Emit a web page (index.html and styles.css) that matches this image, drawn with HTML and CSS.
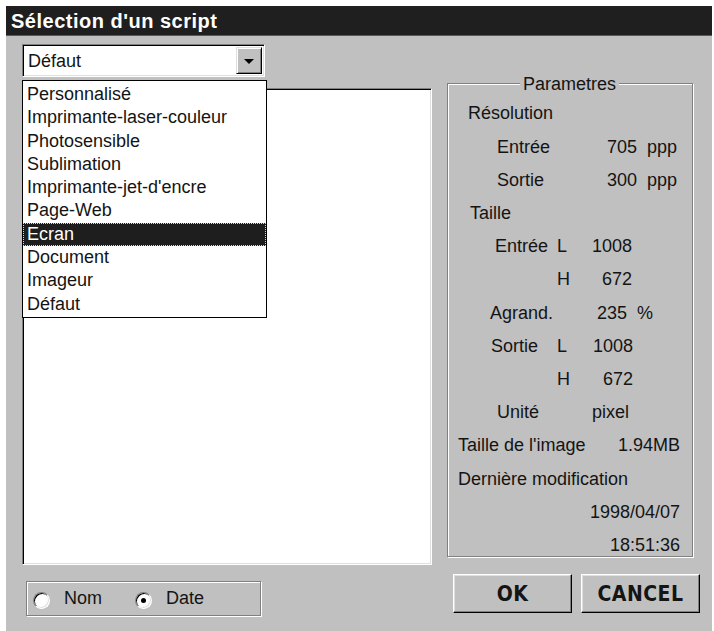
FILE: index.html
```html
<!DOCTYPE html>
<html lang="fr">
<head>
<meta charset="utf-8">
<title>Sélection d'un script</title>
<link rel="stylesheet" href="styles.css">
</head>
<body>
<div class="dialog">
  <div class="titlebar">Sélection d'un script</div>
  <div class="main">
    <div class="leftcol">
      <div class="combo">
        <div class="combo-text">Défaut</div>
        <div class="combo-btn"><span class="arrow"></span></div>
        <ul class="dropdown">
          <li>Personnalisé</li>
          <li>Imprimante-laser-couleur</li>
          <li>Photosensible</li>
          <li>Sublimation</li>
          <li>Imprimante-jet-d'encre</li>
          <li>Page-Web</li>
          <li class="sel">Ecran</li>
          <li>Document</li>
          <li>Imageur</li>
          <li>Défaut</li>
        </ul>
      </div>
      <div class="listbox"></div>
      <div class="radiogroup">
        <span class="radio"></span><span class="rlabel">Nom</span>
        <span class="radio checked"></span><span class="rlabel">Date</span>
      </div>
    </div>
    <div class="rightcol">
      <div class="group">
        <span class="legend">Parametres</span>
        <div class="rows">
          <div class="row"><span class="p20">Résolution</span></div>
          <div class="row"><span class="p49">Entrée</span><span class="v mr15">705&nbsp;&nbsp;ppp</span></div>
          <div class="row"><span class="p49">Sortie</span><span class="v mr15">300&nbsp;&nbsp;ppp</span></div>
          <div class="row"><span class="p22">Taille</span></div>
          <div class="row"><span class="c109 p47">Entrée</span><span>L</span><span class="v mr60">1008</span></div>
          <div class="row"><span class="c109"></span><span>H</span><span class="v mr60">672</span></div>
          <div class="row"><span class="p42">Agrand.</span><span class="v mr39">235&nbsp;&nbsp;%</span></div>
          <div class="row"><span class="c109 p43">Sortie</span><span>L</span><span class="v mr59">1008</span></div>
          <div class="row"><span class="c109"></span><span>H</span><span class="v mr59">672</span></div>
          <div class="row"><span class="c144 p49">Unité</span><span>pixel</span></div>
          <div class="row"><span class="p10">Taille de l'image</span><span class="v mr12">1.94MB</span></div>
          <div class="row"><span class="p10">Dernière modification</span></div>
          <div class="row"><span class="v mr12">1998/04/07</span></div>
          <div class="row"><span class="v mr12">18:51:36</span></div>
        </div>
      </div>
      <div class="buttons">
        <div class="btn">OK</div>
        <div class="btn">CANCEL</div>
      </div>
    </div>
  </div>
</div>
</body>
</html>
```

FILE: styles.css
```css
html, body {
  margin: 0;
  padding: 0;
  background: #ffffff;
}

body {
  font-family: "Liberation Sans", Arial, sans-serif;
  font-size: 18px;
  color: #141414;
}

.dialog {
  margin: 6px 2px 0 6px;
  height: 625px;
  background: #c0c0c0;
  display: flex;
  flex-direction: column;
}

.titlebar {
  height: 30px;
  line-height: 30px;
  background: #1f1f1f;
  color: #ffffff;
  font-weight: bold;
  font-size: 20px;
  letter-spacing: 0.5px;
  padding-left: 5px;
  border-bottom: 1px solid #5a5a5a;
  box-sizing: border-box;
}

.main {
  display: flex;
  padding: 8px 0 0 16px;
  gap: 15px;
}

.leftcol {
  width: 410px;
  display: flex;
  flex-direction: column;
}

/* combo */
.combo {
  position: relative;
  width: 243px;
  height: 33px;
  box-sizing: border-box;
  background: #ffffff;
  border: 1px solid;
  border-color: #808080 #ffffff #ffffff #808080;
  box-shadow: inset 1px 1px 0 #000000, inset -1px -1px 0 #dfdfdf;
  display: flex;
  padding: 2px;
}

.combo-text {
  flex: 1;
  line-height: 28px;
  padding-left: 3px;
}

.combo-btn {
  width: 26px;
  box-sizing: border-box;
  background: #c0c0c0;
  border: 1px solid;
  border-color: #dfdfdf #000000 #000000 #dfdfdf;
  box-shadow: inset 1px 1px 0 #ffffff, inset -1px -1px 0 #808080;
  display: flex;
  align-items: center;
  justify-content: center;
}

.arrow {
  width: 0;
  height: 0;
  border-left: 5px solid transparent;
  border-right: 5px solid transparent;
  border-top: 5px solid #000000;
  margin-top: 1px;
}

.dropdown {
  position: absolute;
  top: 35px;
  left: -1px;
  width: 245px;
  box-sizing: border-box;
  margin: 0;
  padding: 2px 0 1px 0;
  list-style: none;
  background: #ffffff;
  border: 1px solid #000000;
  z-index: 2;
}

.dropdown li {
  height: 23.3px;
  line-height: 23.3px;
  padding-left: 4px;
  white-space: nowrap;
}

.dropdown li.sel {
  background: #1e1e1e;
  color: #ffffff;
  outline: 1px dotted #d8d8d8;
  outline-offset: -1px;
}

/* list box */
.listbox {
  margin-top: 11px;
  height: 477px;
  box-sizing: border-box;
  background: #ffffff;
  border: 1px solid;
  border-color: #808080 #ffffff #ffffff #808080;
  box-shadow: inset 1px 1px 0 #000000, inset -1px -1px 0 #dfdfdf;
}

/* radio group */
.radiogroup {
  margin-top: 16px;
  margin-left: 4px;
  width: 235px;
  height: 35px;
  box-sizing: border-box;
  border: 1px solid #808080;
  box-shadow: 1px 1px 0 #ffffff, inset 1px 1px 0 #ffffff;
  display: flex;
  align-items: center;
  padding-left: 6px;
}

.radio {
  width: 17px;
  height: 17px;
  box-sizing: border-box;
  border-radius: 50%;
  background: #ffffff;
  border: 1px solid;
  border-color: #808080 #ffffff #ffffff #808080;
  box-shadow: inset 1px 1px 0 #000000, inset -1px -1px 0 #dfdfdf;
  display: flex;
  align-items: center;
  justify-content: center;
  margin-top: 3px;
}

.radio.checked::after {
  content: "";
  width: 5px;
  height: 5px;
  border-radius: 50%;
  background: #000000;
}

.rlabel {
  margin-left: 14px;
  width: 71px;
}

/* right column */
.rightcol {
  width: 255px;
  display: flex;
  flex-direction: column;
}

.group {
  position: relative;
  margin-top: 39px;
  width: 246px;
  height: 474px;
  box-sizing: border-box;
  border: 1px solid #808080;
  box-shadow: 1px 1px 0 #ffffff, inset 1px 1px 0 #ffffff;
}

.legend {
  position: absolute;
  top: -10px;
  left: 72px;
  padding: 0 3px;
  background: #c0c0c0;
  line-height: 20px;
}

.rows {
  padding-top: 13.4px;
}

.row {
  display: flex;
  align-items: center;
  height: 33.2px;
  white-space: nowrap;
}

.v { margin-left: auto; }

.p10 { padding-left: 10px; }
.p20 { padding-left: 20px; }
.p22 { padding-left: 22px; }
.p42 { padding-left: 42px; }
.p43 { padding-left: 43px; }
.p47 { padding-left: 47px; }
.p49 { padding-left: 49px; }

.c109 { width: 109px; box-sizing: border-box; }
.c144 { width: 144px; box-sizing: border-box; }

.mr12 { margin-right: 12px; }
.mr15 { margin-right: 15px; }
.mr39 { margin-right: 39px; }
.mr59 { margin-right: 59px; }
.mr60 { margin-right: 60px; }

/* buttons */
.buttons {
  display: flex;
  gap: 9px;
  margin-top: 17px;
  margin-left: 6px;
}

.btn {
  width: 119px;
  height: 39px;
  box-sizing: border-box;
  border: 1px solid;
  border-color: #ffffff #000000 #000000 #ffffff;
  box-shadow: inset -1px -1px 0 #808080, inset 1px 1px 0 #dfdfdf;
  display: flex;
  align-items: center;
  justify-content: center;
  font-family: "DejaVu Sans Condensed", "DejaVu Sans", sans-serif;
  font-stretch: condensed;
  font-weight: bold;
  font-size: 21px;
  letter-spacing: 0.5px;
  color: #141414;
}
```
